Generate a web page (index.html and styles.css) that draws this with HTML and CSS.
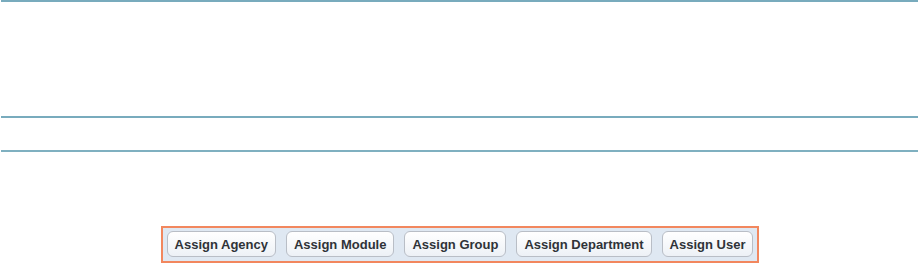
FILE: index.html
```html
<!DOCTYPE html>
<html>
<head>
<meta charset="utf-8">
<link rel="stylesheet" href="styles.css">
</head>
<body>
<div class="page">
  <div class="rule rule-top"></div>
  <div class="rule rule-mid"></div>
  <div class="rule rule-low"></div>
  <div class="toolbar-wrap">
    <div class="toolbar">
      <button class="btn">Assign Agency</button>
      <button class="btn">Assign Module</button>
      <button class="btn">Assign Group</button>
      <button class="btn">Assign Department</button>
      <button class="btn">Assign User</button>
    </div>
  </div>
</div>
</body>
</html>
```
FILE: styles.css
```css
html, body {
  margin: 0;
  padding: 0;
  background: #ffffff;
}
.page {
  width: 920px;
  height: 264px;
  display: flex;
  flex-direction: column;
  font-family: "Liberation Sans", Arial, sans-serif;
}
.rule {
  height: 2px;
  margin: 0 2px 0 1px;
  background: #78abbd;
}
.rule-mid {
  margin-top: 114px;
}
.rule-low {
  margin-top: 32px;
  background: #7fb0c0;
}
.toolbar-wrap {
  display: flex;
  justify-content: center;
  margin-top: 74px;
}
.toolbar {
  display: flex;
  gap: 10px;
  padding: 3px 4px 4px 4px;
  background: #dfe8f2;
  border: 2px solid #f2875e;
  height: 37px;
  box-sizing: border-box;
}
.btn {
  font-family: "Liberation Sans", Arial, sans-serif;
  font-weight: bold;
  font-size: 13px;
  color: #2f3338;
  height: 26px;
  padding: 0 7px;
  border: 1px solid #b9bec6;
  border-radius: 6px;
  background: linear-gradient(#ffffff, #edf1f6);
  cursor: pointer;
}
```
